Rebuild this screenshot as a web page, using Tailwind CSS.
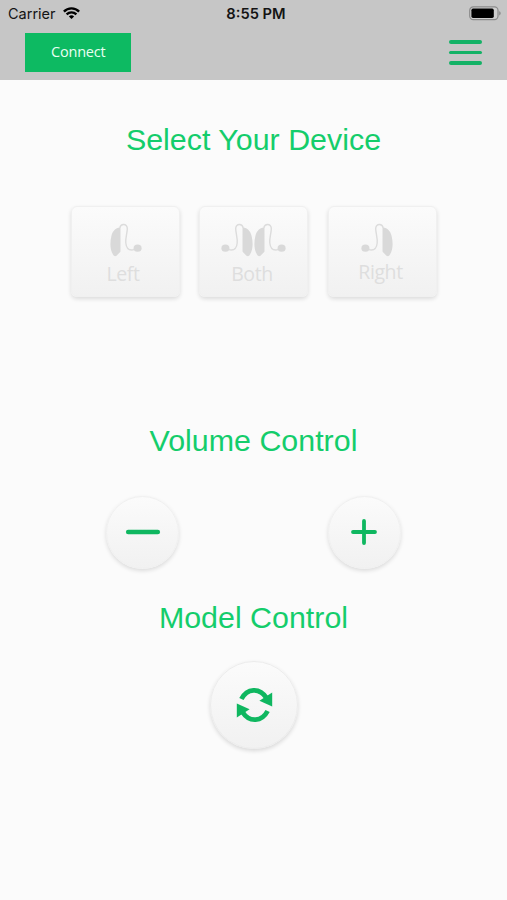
<!DOCTYPE html>
<html lang="en">
<head>
    <meta charset="UTF-8">
    <meta name="viewport" content="width=device-width, initial-scale=1.0">
    <title>Device Control</title>
    <script src="https://cdn.jsdelivr.net/npm/@tailwindcss/browser@4"></script>
</head>
<body class="h-[900px] overflow-hidden bg-[#fbfbfb] font-['Liberation_Sans',sans-serif]">
    <!-- Header -->
    <header class="h-[79.5px] bg-[#c6c6c6]">
        <div class="grid h-7 grid-cols-3 items-center pl-2 pr-[6px] font-['Inter',sans-serif] text-[#141414]">
            <div class="flex items-center gap-[7px]">
                <span class="text-[14.5px] leading-7">Carrier</span>
                <svg class="-mt-[2px] h-3 w-[17px]" viewBox="0 0 17 12" fill="none" stroke="#000" stroke-width="2.3">
                    <path d="M0.9 4.6C5 0.2 12 0.2 16.1 4.6"/>
                    <path d="M3.6 7.4C6.4 4.6 10.6 4.6 13.4 7.4"/>
                    <path d="M8.5 12L5.9 9.4C7.4 8 9.6 8 11.1 9.4Z" fill="#000" stroke="none"/>
                </svg>
            </div>
            <span class="pl-[3px] text-center text-[14.7px] font-semibold leading-7">8:55 PM</span>
            <svg class="-mt-[2px] h-[15px] w-8 justify-self-end" viewBox="0 0 32 15">
                <rect x="0.7" y="0.9" width="28.3" height="12.8" rx="3.6" fill="#cfcfcf" stroke="#8b8b8b" stroke-width="1.2"/>
                <rect x="2.4" y="2.6" width="22.4" height="9.3" rx="1.6" fill="#000"/>
                <path d="M30.2 5.2C32.2 5.8 32.2 8.8 30.2 9.4Z" fill="#8b8b8b"/>
            </svg>
        </div>
        <div class="flex items-start justify-between pl-[25px] pr-[25px] pt-[5px]">
            <button class="h-[38.5px] w-[105.5px] bg-[#0dba62] pb-px pl-px font-['Open_Sans',sans-serif] text-[14.5px] tracking-[-0.2px] text-[#e9fff2]">Connect</button>
            <div class="flex flex-col gap-[7px] pt-[7px]">
                <div class="h-[3.5px] w-[33px] rounded-full bg-[#14b266]"></div>
                <div class="h-[3.5px] w-[33px] rounded-full bg-[#14b266]"></div>
                <div class="h-[3.5px] w-[33px] rounded-full bg-[#14b266]"></div>
            </div>
        </div>
    </header>

    <!-- One hearing aid, reused by the three buttons -->
    <svg class="hidden">
        <symbol id="aid" viewBox="0 0 33 35">
            <path d="M11.5 4.6C7 4.2 3.6 8 2.4 13C0.8 19.5 1 27 4 31.6C5 33.3 6.4 33.8 7.8 32.4C9.2 31 11 29.6 11.5 28.6Z" fill="#d9d9d9"/>
            <path d="M10.8 4.8C11.2 2.9 12.7 1.5 14.5 1.5C16.9 1.5 18.5 3.2 18.3 6C18 11 16.3 15.5 16.8 20C17.2 24 19.4 27 22.6 27C25 27 26 25.8 28.4 25.2" fill="none" stroke="#dcdcdc" stroke-width="1.4"/>
            <ellipse cx="28.6" cy="25.2" rx="4" ry="3.6" fill="#d9d9d9"/>
        </symbol>
    </svg>

    <main>
        <h1 class="pt-[40.5px] text-center text-[30.4px] leading-[38px] text-[#14cd6b]">Select Your Device</h1>

        <div class="flex justify-center gap-[19.5px] pt-[47.5px] font-['Open_Sans',sans-serif] text-[19.5px] leading-6 tracking-[-0.4px] text-[#dedede]">
            <button class="flex h-[91px] w-[109px] flex-col items-center rounded-[6px] border border-[#f0f0f0] bg-linear-to-b from-[#fbfbfb] to-[#f1f1f1] pt-[16px] shadow-[0_2px_4px_rgba(0,0,0,0.13)]">
                <svg class="h-[35px] w-[33px]"><use href="#aid"/></svg>
                <span class="mt-[4px] mr-1">Left</span>
            </button>
            <button class="flex h-[91px] w-[109px] flex-col items-center rounded-[6px] border border-[#f0f0f0] bg-linear-to-b from-[#fbfbfb] to-[#f1f1f1] pt-[16px] shadow-[0_2px_4px_rgba(0,0,0,0.13)]">
                <div class="flex">
                    <svg class="h-[35px] w-[33px] -scale-x-100"><use href="#aid"/></svg>
                    <svg class="-ml-px h-[35px] w-[33px]"><use href="#aid"/></svg>
                </div>
                <span class="mt-[4px] mr-[3px]">Both</span>
            </button>
            <button class="flex h-[91px] w-[109px] flex-col items-center rounded-[6px] border border-[#f0f0f0] bg-linear-to-b from-[#fbfbfb] to-[#f1f1f1] pt-[16px] shadow-[0_2px_4px_rgba(0,0,0,0.13)]">
                <svg class="mr-[9px] h-[35px] w-[33px] -scale-x-100"><use href="#aid"/></svg>
                <span class="mt-[2px] mr-[3px]">Right</span>
            </button>
        </div>

        <!-- Volume -->
        <h2 class="pt-[124.5px] text-center text-[30.4px] leading-[38px] text-[#14cd6b]">Volume Control</h2>
        <div class="flex justify-center gap-[148.5px] pt-[36.5px]">
            <button class="flex size-[73px] items-center justify-center rounded-full border border-[#f0f0f0] bg-linear-to-b from-[#fbfbfb] to-[#f1f1f1] shadow-[0_2px_4px_rgba(0,0,0,0.13)]">
                <svg class="size-9" viewBox="0 0 36 36" stroke="#0fb760" stroke-width="4.6" stroke-linecap="round">
                    <path d="M3.2 18H32.8"/>
                </svg>
            </button>
            <button class="flex size-[73px] items-center justify-center rounded-full border border-[#f0f0f0] bg-linear-to-b from-[#fbfbfb] to-[#f1f1f1] shadow-[0_2px_4px_rgba(0,0,0,0.13)]">
                <svg class="size-9" viewBox="0 0 36 36" stroke="#0fb760" stroke-width="3.8" stroke-linecap="round">
                    <path d="M7 18H29M18 7V29"/>
                </svg>
            </button>
        </div>

        <!-- Mode -->
        <h2 class="pt-[29.5px] text-center text-[30.4px] leading-[38px] text-[#14cd6b]">Model Control</h2>
        <div class="flex justify-center pt-[24.5px] pl-px">
            <button class="flex size-[88px] items-center justify-center rounded-full border border-[#ececec] bg-linear-to-b from-[#fbfbfb] to-[#f1f1f1] shadow-[0_2px_4px_rgba(0,0,0,0.14)]">
                <svg class="h-9 w-[37px]" viewBox="0 0 37 36" fill="none" stroke="#0fb760" stroke-width="4.8">
                    <path d="M5.4 12C11 1.2 23.5 0 30.6 11"/>
                    <path d="M36.2 5.4V19.6L23.4 13.8Z" fill="#0fb760" stroke="none"/>
                    <path d="M31.6 24C26 34.8 13.5 36 6.4 25"/>
                    <path d="M0.8 30.6V16.4L13.6 22.2Z" fill="#0fb760" stroke="none"/>
                </svg>
            </button>
        </div>
    </main>
</body>
</html>
